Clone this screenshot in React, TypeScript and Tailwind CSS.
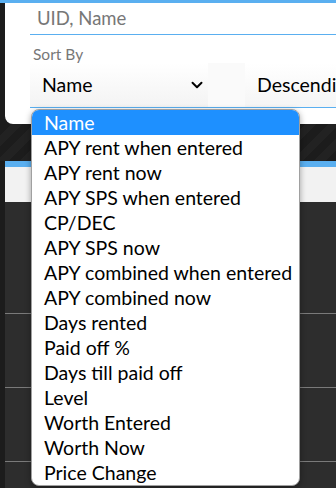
import { ChevronDown } from "lucide-react";

const OPTIONS = [
  "Name",
  "APY rent when entered",
  "APY rent now",
  "APY SPS when entered",
  "CP/DEC",
  "APY SPS now",
  "APY combined when entered",
  "APY combined now",
  "Days rented",
  "Paid off %",
  "Days till paid off",
  "Level",
  "Worth Entered",
  "Worth Now",
  "Price Change",
];

export default function App() {
  return (
    <div className="relative h-[488px] w-[336px] overflow-hidden bg-[#1c1c1c] font-['Lato',sans-serif]">
      <div className="h-[3px] bg-[#5aaff0]" />

      {/* filter card */}
      <div className="ml-[5px] flex h-[121px] flex-col overflow-hidden rounded-bl-[8px] bg-white pl-[25px]">
        <div className="flex h-[32px] shrink-0 items-center border-b border-[#5aaff0] pl-[7px] text-[18.5px] text-[#777]">
          UID, Name
        </div>
        <div className="pl-[3px] pt-[10px] text-[15.5px] leading-[18px] text-[#777]">Sort By</div>
        <div className="flex h-[45px] shrink-0 border-b border-[#5aaff0] text-[19.5px] text-black">
          <div className="flex w-[178px] shrink-0 items-center justify-between bg-gradient-to-b from-white to-[#f3f3f3] pl-[12px] pr-[2px]">
            <span>Name</span>
            <ChevronDown size={18} strokeWidth={2.6} />
          </div>
          <div className="w-[37px] shrink-0 bg-[#fafafa]" />
          <div className="flex shrink-0 items-center whitespace-nowrap bg-gradient-to-b from-white to-[#f5f5f5] pl-[12px] pr-[20px]">
            Descending
          </div>
        </div>
      </div>

      {/* background page */}
      <div className="h-[37px] bg-[repeating-linear-gradient(135deg,#1c1c1c_0px,#1c1c1c_8px,#222_8px,#222_16px)]" />
      <div className="ml-[5px] flex flex-col">
        <div className="h-[6px] bg-[#5aaff0]" />
        <div className="h-[35px] bg-[#f2f2f2]" />
        <div className="h-[112px] border-b border-[#7a7a7a] bg-[#2d2d2d]" />
        <div className="h-[74px] border-b border-[#7a7a7a] bg-[#2d2d2d]" />
        <div className="h-[74px] border-b border-[#7a7a7a] bg-[#2d2d2d]" />
        <div className="h-[40px] bg-[#2d2d2d]" />
      </div>

      {/* open select list */}
      <ul className="absolute left-[31px] top-[109px] w-[269px] overflow-hidden rounded-[8px] border border-[#a0a0a0] bg-white shadow-[0_2px_6px_rgba(0,0,0,0.35)]">
        {OPTIONS.map((option, index) => (
          <li
            key={option}
            className={`flex h-[25px] items-center whitespace-nowrap pl-[12px] text-[19.5px] leading-none ${
              index === 0 ? "bg-[#1e90ff] text-white" : "text-black"
            }`}
          >
            {option}
          </li>
        ))}
      </ul>
    </div>
  );
}
